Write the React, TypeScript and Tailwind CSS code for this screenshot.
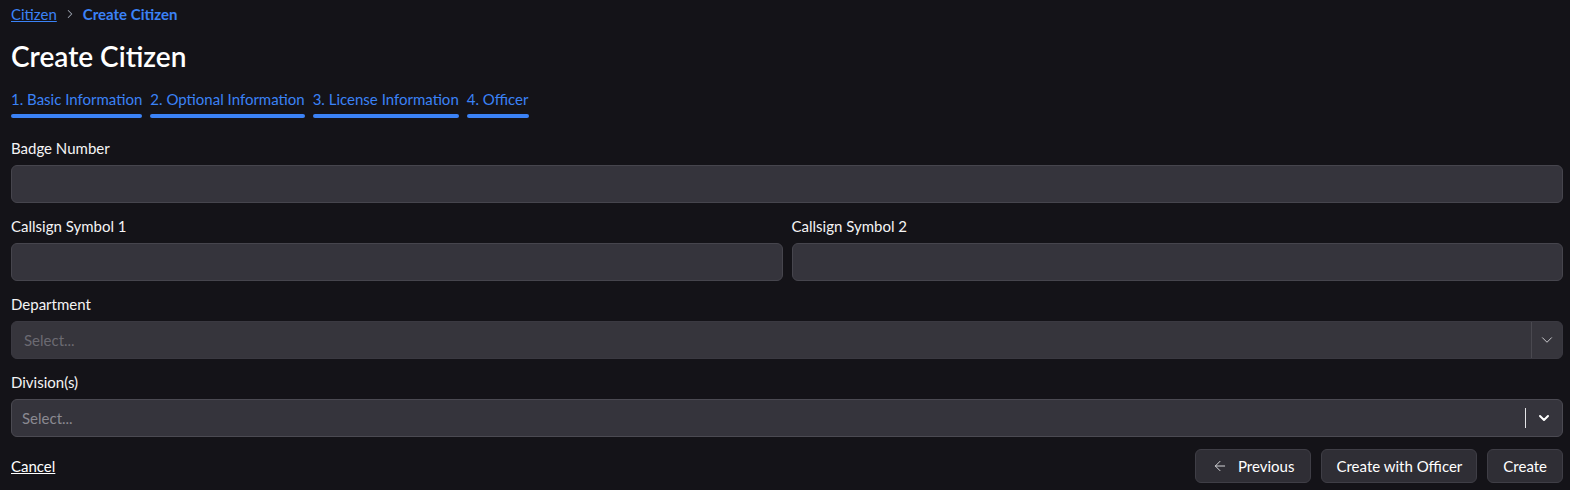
import { ChevronDown, ChevronRight, ArrowLeft } from 'lucide-react'

const font = { fontFamily: '"Source Sans Pro", Lato, "Noto Sans", sans-serif' }

function Label({ children }: { children: React.ReactNode }) {
  return <label className="block text-[15px] leading-5 text-[#f4f4f5] mb-[7px]">{children}</label>
}

function TextInput() {
  return (
    <input
      className="block w-full h-[38px] rounded-md border border-[#46454d] bg-[#35343c] px-3 text-[15px] text-white outline-none"
    />
  )
}

export default function App() {
  const tabs = ['1. Basic Information', '2. Optional Information', '3. License Information', '4. Officer']

  return (
    <div className="min-h-[490px] bg-[#141318] pl-[11px] pr-[7px] pt-[4px]" style={font}>
      {/* Breadcrumb */}
      <nav className="flex items-center gap-1.5 text-[15px] leading-5">
        <a href="#" className="text-[#3b82f6] underline">Citizen</a>
        <ChevronRight className="size-3.5 text-[#9ca3af]" strokeWidth={1.75} />
        <span className="text-[#3b82f6] font-bold">Create Citizen</span>
      </nav>

      <h1 className="mt-[14px] text-[28px] leading-9 font-semibold text-white">Create Citizen</h1>

      {/* Steps */}
      <div className="mt-[15px] flex gap-2">
        {tabs.map((t) => (
          <div key={t} className="flex flex-col">
            <span className="text-[15px] leading-5 text-[#3b82f6]">{t}</span>
            <span className="mt-[5px] h-1 rounded-full bg-[#3b82f6]" />
          </div>
        ))}
      </div>

      <div className="mt-[20px]">
        <Label>Badge Number</Label>
        <TextInput />
      </div>

      <div className="mt-[13px] grid grid-cols-2 gap-[9px]">
        <div>
          <Label>Callsign Symbol 1</Label>
          <TextInput />
        </div>
        <div>
          <Label>Callsign Symbol 2</Label>
          <TextInput />
        </div>
      </div>

      <div className="mt-[13px]">
        <Label>Department</Label>
        <div className="flex h-[38px] items-stretch rounded-md border border-[#3a3941] bg-[#36353c]">
          <span className="flex-1 flex items-center pl-3 text-[15px] text-[#6b6a72]">Select...</span>
          <span className="flex w-[31px] items-center justify-center border-l border-[#4a4950]">
            <ChevronDown className="size-[18px] text-[#d4d4d8]" strokeWidth={1.25} />
          </span>
        </div>
      </div>

      <div className="mt-[13px]">
        <Label>Division(s)</Label>
        <div className="flex h-[38px] items-center rounded-md border border-[#4b4a52] bg-[#35343c]">
          <span className="flex-1 pl-[10px] text-[15px] text-[#8a8991]">Select...</span>
          <span className="h-5 w-px bg-[#e4e4e7]" />
          <span className="flex w-[36px] items-center justify-center">
            <ChevronDown className="size-4 text-white" strokeWidth={3} />
          </span>
        </div>
      </div>

      <div className="mt-[12px] flex items-center justify-between">
        <a href="#" className="text-[15px] text-white underline">Cancel</a>
        <div className="flex gap-[10px]">
          <button className="flex h-[34px] items-center gap-2.5 rounded-md border border-[#3f3e46] bg-[#2f2e35] px-4 text-[15px] text-white">
            <ArrowLeft className="size-4 text-[#d4d4d8]" strokeWidth={1.5} />
            Previous
          </button>
          <button className="h-[34px] rounded-md border border-[#3f3e46] bg-[#2f2e35] px-[14px] text-[15px] text-white">
            Create with Officer
          </button>
          <button className="h-[34px] rounded-md border border-[#3f3e46] bg-[#2f2e35] px-[15px] text-[15px] text-white">
            Create
          </button>
        </div>
      </div>
    </div>
  )
}
